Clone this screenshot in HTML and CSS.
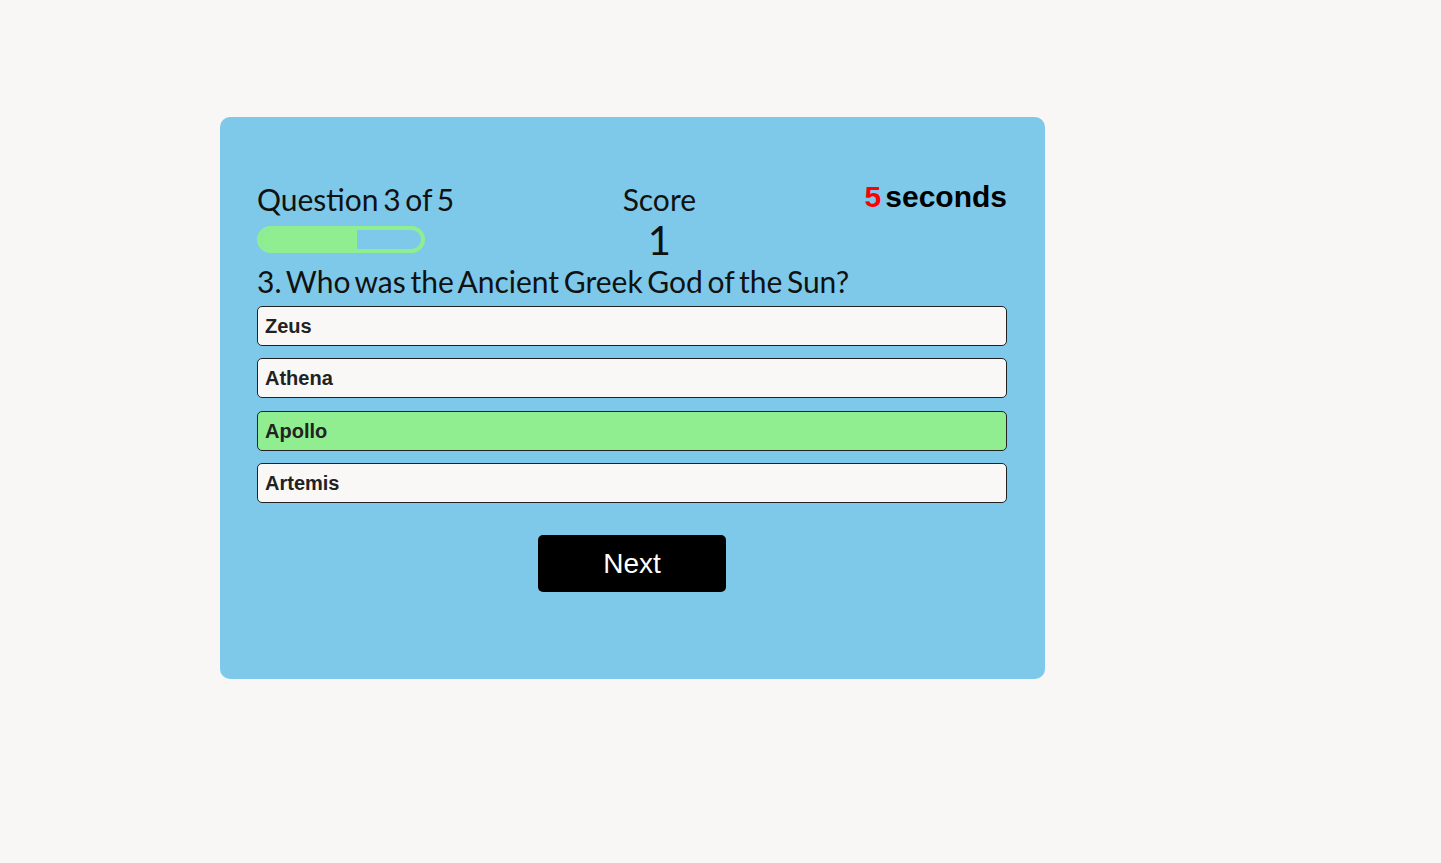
FILE: index.html
```html
<!DOCTYPE html>
<html lang="en">
<head>
<meta charset="utf-8">
<title>Quiz</title>
<link rel="stylesheet" href="styles.css">
</head>
<body>
<div class="quiz-card">
  <div class="quiz-header">
    <div class="progress-col">
      <div class="question-count">Question 3 of 5</div>
      <div class="progress-bar"><div class="progress-fill" style="width: 60%"></div></div>
    </div>
    <div class="score-col">
      <div class="score-label">Score</div>
      <div class="score-value">1</div>
    </div>
    <div class="timer"><span class="timer-num">5</span>seconds</div>
  </div>
  <div class="question-text">3. Who was the Ancient Greek God of the Sun?</div>
  <div class="options">
    <div class="option">Zeus</div>
    <div class="option">Athena</div>
    <div class="option option-correct">Apollo</div>
    <div class="option">Artemis</div>
  </div>
  <div class="actions">
    <button class="next-btn">Next</button>
  </div>
</div>
</body>
</html>
```
FILE: styles.css
```css
html, body {
  margin: 0;
  padding: 0;
}
body {
  background: #f8f7f6;
  font-family: "Liberation Sans", Arial, sans-serif;
  min-height: 863px;
}
.quiz-card {
  margin: 117px 0 0 220px;
  width: 750px;
  padding: 64px 38px 87px 37px;
  background: #7ec9e9;
  border-radius: 10px;
}
.quiz-header {
  display: flex;
  justify-content: space-between;
  align-items: flex-start;
}
.question-count,
.score-label,
.score-value,
.question-text {
  font-family: Lato, "Liberation Sans", sans-serif;
  font-weight: 400;
  color: #111;
  word-spacing: -3px;
}
.question-count {
  font-size: 30px;
  line-height: 36px;
}
.progress-bar {
  margin-top: 9px;
  width: 160px;
  height: 19px;
  border: 4px solid #90ee90;
  border-radius: 14px;
  overflow: hidden;
}
.progress-fill {
  height: 100%;
  background: #90ee90;
}
.score-col {
  display: flex;
  flex-direction: column;
  align-items: center;
}
.score-label {
  font-size: 30px;
  line-height: 36px;
}
.score-value {
  font-size: 40px;
  line-height: 46px;
}
.timer {
  font-family: "Liberation Sans", Arial, sans-serif;
  font-weight: bold;
  font-size: 30px;
  line-height: 34px;
  color: #000;
  margin-top: -1px;
}
.timer-num {
  color: #ff0000;
  margin-right: 4px;
}
.question-text {
  font-size: 30px;
  line-height: 36px;
}
.options {
  margin-top: 7px;
  display: flex;
  flex-direction: column;
  gap: 12.3px;
}
.option {
  border: 1px solid #222;
  border-radius: 5px;
  background: #f9f8f7;
  padding: 8px 7px;
  font-family: "Liberation Sans", Arial, sans-serif;
  font-weight: bold;
  font-size: 20px;
  line-height: 22px;
  color: #222;
}
.option-correct {
  background: #90ee90;
}
.actions {
  display: flex;
  justify-content: center;
  margin-top: 32px;
}
.next-btn {
  width: 188px;
  height: 57px;
  padding: 0;
  border: none;
  border-radius: 5px;
  background: #000;
  color: #fff;
  font-family: "Liberation Sans", Arial, sans-serif;
  font-size: 28px;
  line-height: 33px;
}
```
